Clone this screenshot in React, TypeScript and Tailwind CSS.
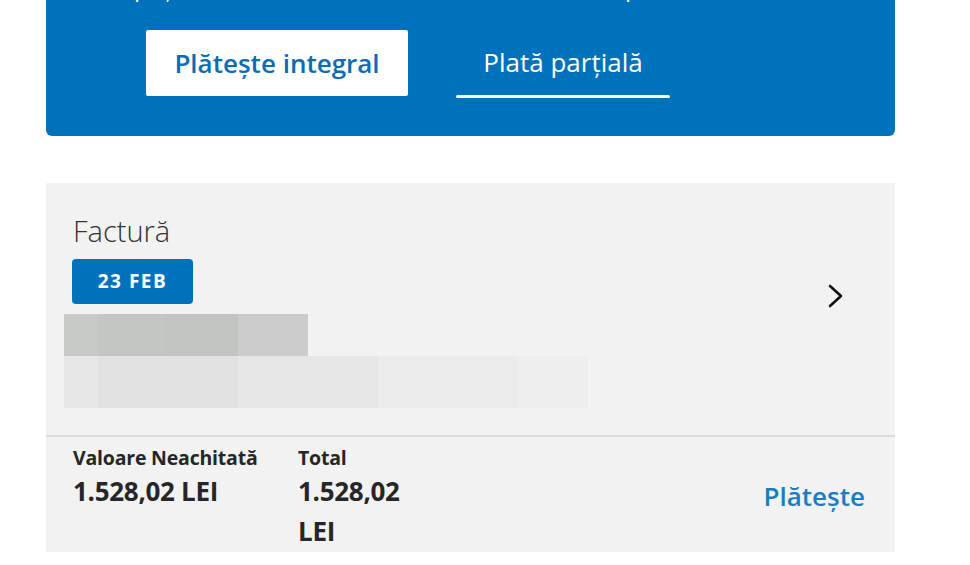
import React from 'react';

const BLUE = 'bg-[#0072bc]';

const Chevron = () => (
  <svg width="18" height="24" viewBox="0 0 18 24" fill="none">
    <polyline points="3,2 14,12 3,22" stroke="#111" strokeWidth="2.6" strokeLinecap="round" strokeLinejoin="round" />
  </svg>
);

// pixelated placeholder blocks (blurred account data)
const topTiles = [
  { w: 34, c: 'bg-[#c7cac7]' },
  { w: 67, c: 'bg-[#c3c6c3]' },
  { w: 73, c: 'bg-[#c1c4c1]' },
  { w: 70, c: 'bg-[#cbcccb]' },
];
const bottomTiles = [
  { w: 34, c: 'bg-[#e6e6e6]' },
  { w: 140, c: 'bg-[#e1e1e1]' },
  { w: 140, c: 'bg-[#e6e6e6]' },
  { w: 140, c: 'bg-[#ebebeb]' },
  { w: 70, c: 'bg-[#eeeeee]' },
];

export default function App() {
  return (
    <div className="w-[970px] h-[565px] bg-white overflow-hidden" style={{ fontFamily: '"Open Sans", "Noto Sans", sans-serif' }}>
      <div className="ml-[46px] w-[849px]">
        {/* Payment type panel */}
        <div className={`${BLUE} h-[136px] rounded-b-md overflow-hidden`}>
          <p className="mt-[-28px] pl-[88px] text-white text-[24px] leading-[30px] whitespace-nowrap">
            poți achita suma totală a facturii sau doar o parte, cum vrei
          </p>
          <div className="flex items-start pl-[100px] mt-[28px]">
            <button className="w-[262px] h-[66px] bg-white rounded-[2px] text-[#0a6cb4] text-[26px] font-semibold">
              Plătește integral
            </button>
            <div className="ml-[48px] w-[214px] h-[68px] flex flex-col">
              <span className="flex-1 flex items-center justify-center text-white text-[26px]">Plată parțială</span>
              <span className="h-[3px] bg-white rounded-full" />
            </div>
          </div>
        </div>

        {/* Invoice card */}
        <div className="mt-[47px] bg-[#f2f2f2] h-[369px] flex flex-col">
          <div className="flex h-[254px] border-b-2 border-[#dcdcdc]">
            <div className="flex-1 pt-[31px] pl-[27px]">
              <div className="text-[29px] leading-[34px] text-[#333] font-light">Factură</div>
              <div className={`${BLUE} mt-[11px] ml-[-1px] w-[121px] h-[45px] rounded-[4px] flex items-center justify-center text-white text-[19px] font-bold tracking-[1.5px]`}>
                23 FEB
              </div>
              <div className="mt-[10px] ml-[-9px] flex h-[42px]">
                {topTiles.map((t, i) => (
                  <div key={i} className={t.c} style={{ width: t.w }} />
                ))}
              </div>
              <div className="flex h-[52px] ml-[-9px]">
                {bottomTiles.map((t, i) => (
                  <div key={i} className={t.c} style={{ width: t.w }} />
                ))}
              </div>
            </div>
            <div className="pt-[101px] pr-[50px]">
              <Chevron />
            </div>
          </div>

          <div className="flex-1 flex items-start pl-[27px] pr-[30px] pt-[8px] text-[#262626]">
            <div className="w-[225px]">
              <div className="text-[19.5px] leading-[26px] font-bold tracking-[-0.2px]">Valoare Neachitată</div>
              <div className="text-[26px] leading-[40px] font-bold tracking-[-0.3px]">1.528,02 LEI</div>
            </div>
            <div className="w-[125px]">
              <div className="text-[19.5px] leading-[26px] font-bold tracking-[-0.2px]">Total</div>
              <div className="text-[26px] leading-[40px] font-bold tracking-[-0.3px]">1.528,02 LEI</div>
            </div>
            <div className="flex-1" />
            <button className="mt-[35px] text-[26px] leading-[32px] font-semibold text-[#1b7cc3]">Plătește</button>
          </div>
        </div>
      </div>
    </div>
  );
}
